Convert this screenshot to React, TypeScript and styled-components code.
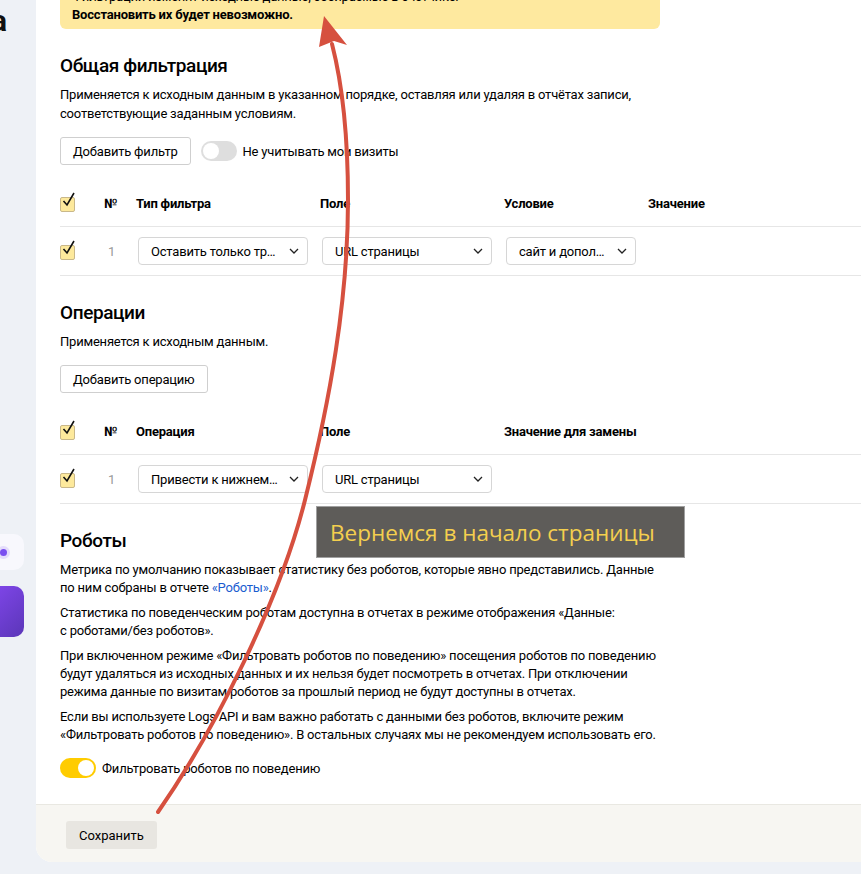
import React from "react";
import styled, { createGlobalStyle } from "styled-components";

const Global = createGlobalStyle`
  html, body { margin: 0; padding: 0; }
  body {
    background: #eef1f6;
    font-family: Roboto, "Liberation Sans", Arial, sans-serif;
    letter-spacing: -0.2px;
    color: #000;
  }
`;

const Page = styled.div`
  position: relative;
  display: flex;
  width: 861px;
  height: 874px;
  overflow: hidden;
  background: #eef1f6;
`;

const Sidebar = styled.aside`
  width: 36px;
  flex: none;
  display: flex;
  flex-direction: column;
  overflow: hidden;
`;

const LogoTail = styled.div`
  font-size: 30px;
  font-weight: 700;
  line-height: 30px;
  margin: 6px 0 0 -9px;
  color: #111;
`;

const SidePill = styled.div`
  margin-top: 498px;
  width: 24px;
  height: 36px;
  background: #f8f8fd;
  border-radius: 0 10px 10px 0;
  display: flex;
  align-items: center;
`;

const SideDot = styled.span`
  width: 7px;
  height: 7px;
  border-radius: 50%;
  background: #7a4ff0;
  box-shadow: 0 0 0 3px #e4dcfb;
`;

const SideBlock = styled.div`
  margin-top: 16px;
  width: 24px;
  height: 51px;
  border-radius: 0 10px 10px 0;
  background: linear-gradient(135deg, #7d45e6, #5b36b8);
`;

const Main = styled.main`
  flex: 1;
  height: 862px;
  background: #fff;
  border-bottom-left-radius: 16px;
  display: flex;
  flex-direction: column;
  overflow: hidden;
`;

const Content = styled.div`
  flex: 1;
  padding-left: 24px;
`;

const Warning = styled.div`
  width: 600px;
  box-sizing: border-box;
  margin-top: -24px;
  padding: 12px 12px 5px;
  background: #fee99f;
  border-radius: 0 0 6px 6px;
  font-size: 13px;
  line-height: 18px;
`;

const Bold = styled.div`
  font-weight: 700;
`;

const Heading = styled.h2`
  margin: 25px 0 0;
  font-size: 19px;
  font-weight: 500;
  line-height: 24px;
  letter-spacing: -0.4px;
`;

const Desc = styled.p`
  margin: 7px 0 0;
  font-size: 13px;
  line-height: 19px;
  max-width: 600px;
`;

const Para = styled.p`
  margin: 8px 0 0;
  font-size: 13px;
  line-height: 18px;
  max-width: 604px;
  & + & {
    margin-top: 7px;
  }
`;

const Link = styled.a`
  color: #1a5ccf;
  text-decoration: none;
`;

const ActionRow = styled.div<{ $top?: number }>`
  display: flex;
  align-items: center;
  gap: 10px;
  margin-top: ${(p) => p.$top ?? 14}px;
`;

const Button = styled.button`
  height: 28px;
  padding: 0 12px;
  background: #fff;
  border: 1px solid #cfcfcf;
  border-radius: 3px;
  font-family: inherit;
  font-size: 13px;
  letter-spacing: -0.2px;
  color: #000;
`;

const Toggle = styled.span<{ $on?: boolean }>`
  position: relative;
  width: 36px;
  height: 20px;
  border-radius: 10px;
  background: ${(p) => (p.$on ? "#ffcc00" : "#dedede")};
  flex: none;
  &::after {
    content: "";
    position: absolute;
    top: 2px;
    left: ${(p) => (p.$on ? "18px" : "2px")};
    width: 16px;
    height: 16px;
    border-radius: 50%;
    background: #fff;
  }
`;

const ToggleLabel = styled.label`
  display: flex;
  align-items: center;
  gap: 6px;
  font-size: 13px;
`;

const Table = styled.div`
  margin-top: 16px;
`;

const Row = styled.div<{ $head?: boolean }>`
  display: grid;
  grid-template-columns: 44px 32px 184px 184px 144px 1fr;
  align-items: center;
  height: ${(p) => (p.$head ? 45 : 48)}px;
  border-bottom: 1px solid #e6e6e6;
  font-size: 13px;
  font-weight: ${(p) => (p.$head ? 700 : 400)};
`;

const Num = styled.span`
  color: #999;
  padding-left: 4px;
`;

const Box = styled.span`
  position: relative;
  display: block;
  width: 13px;
  height: 13px;
  margin-top: 2px;
  background: #fde99c;
  border: 1px solid #c9b88a;
  border-radius: 2px;
  svg {
    position: absolute;
    left: 1px;
    top: -6px;
  }
`;

const Select = styled.div<{ $w: number }>`
  display: flex;
  align-items: center;
  justify-content: space-between;
  width: ${(p) => p.$w}px;
  height: 28px;
  box-sizing: border-box;
  margin-left: 2px;
  padding: 0 8px 0 12px;
  border: 1px solid #d6d6d6;
  border-radius: 4px;
  font-size: 13px;
  white-space: nowrap;
`;

const Footer = styled.footer`
  height: 58px;
  flex: none;
  box-sizing: border-box;
  padding: 16px 0 0 30px;
  background: #f7f6f2;
  border-top: 1px solid #e9e8e2;
`;

const SaveButton = styled.button`
  height: 28px;
  padding: 0 13px;
  border: none;
  border-radius: 3px;
  background: #e8e6e1;
  font-family: inherit;
  font-size: 13px;
  color: #000;
`;

const Caption = styled.div`
  position: absolute;
  left: 316px;
  top: 506px;
  width: 369px;
  height: 52px;
  box-sizing: border-box;
  padding-left: 13px;
  display: flex;
  align-items: center;
  background: #5e5c59;
  border: 1px solid #a0a0a0;
  color: #f4cf4e;
  font-family: "Open Sans", sans-serif;
  font-size: 22.5px;
  letter-spacing: 0;
`;

const ArrowLayer = styled.svg`
  position: absolute;
  left: 0;
  top: 0;
  pointer-events: none;
`;

const Check = () => (
  <Box>
    <svg width="14" height="16" viewBox="0 0 14 16">
      <path d="M1.5 9 L5 13 L12 1" fill="none" stroke="#111" strokeWidth="1.6" />
    </svg>
  </Box>
);

const Chevron = () => (
  <svg width="10" height="6" viewBox="0 0 10 6">
    <path d="M1 1 L5 5 L9 1" fill="none" stroke="#222" strokeWidth="1.3" />
  </svg>
);

const Sel = ({ w, children }: { w: number; children: React.ReactNode }) => (
  <Select $w={w}>
    <span>{children}</span>
    <Chevron />
  </Select>
);

export default function App() {
  return (
    <Page>
      <Global />
      <Sidebar>
        <LogoTail>а</LogoTail>
        <SidePill>
          <SideDot />
        </SidePill>
        <SideBlock />
      </Sidebar>
      <Main>
        <Content>
          <Warning>
            <div>Фильтрации изменят исходные данные, собираемые в счётчике.</div>
            <Bold>Восстановить их будет невозможно.</Bold>
          </Warning>

          <Heading>Общая фильтрация</Heading>
          <Desc>
            Применяется к исходным данным в указанном порядке, оставляя или удаляя в отчётах записи,
            соответствующие заданным условиям.
          </Desc>
          <ActionRow>
            <Button>Добавить фильтр</Button>
            <ToggleLabel>
              <Toggle />
              Не учитывать мои визиты
            </ToggleLabel>
          </ActionRow>
          <Table>
            <Row $head>
              <Check />
              <span>№</span>
              <span>Тип фильтра</span>
              <span>Поле</span>
              <span>Условие</span>
              <span>Значение</span>
            </Row>
            <Row>
              <Check />
              <Num>1</Num>
              <Sel w={170}>Оставить только тр…</Sel>
              <Sel w={170}>URL страницы</Sel>
              <Sel w={130}>сайт и допол…</Sel>
              <span />
            </Row>
          </Table>

          <Heading>Операции</Heading>
          <Desc>Применяется к исходным данным.</Desc>
          <ActionRow>
            <Button>Добавить операцию</Button>
          </ActionRow>
          <Table>
            <Row $head>
              <Check />
              <span>№</span>
              <span>Операция</span>
              <span>Поле</span>
              <span style={{ gridColumn: "5 / 7" }}>Значение для замены</span>
            </Row>
            <Row>
              <Check />
              <Num>1</Num>
              <Sel w={170}>Привести к нижнем…</Sel>
              <Sel w={170}>URL страницы</Sel>
              <span />
              <span />
            </Row>
          </Table>

          <Heading>Роботы</Heading>
          <Para>
            Метрика по умолчанию показывает статистику без роботов, которые явно представились. Данные
            по ним собраны в отчете <Link>«Роботы»</Link>.
          </Para>
          <Para>
            Статистика по поведенческим роботам доступна в отчетах в режиме отображения «Данные:
            с{"\u00A0"}роботами/без роботов».
          </Para>
          <Para>
            При включенном режиме «Фильтровать роботов по поведению» посещения роботов по поведению
            будут удаляться из исходных данных и их нельзя будет посмотреть в отчетах. При отключении
            режима данные по визитам роботов за прошлый период не будут доступны в отчетах.
          </Para>
          <Para>
            Если вы используете Logs API и вам важно работать с данными без роботов, включите режим
            «Фильтровать роботов по поведению». В остальных случаях мы не рекомендуем использовать его.
          </Para>
          <ActionRow $top={14}>
            <ToggleLabel>
              <Toggle $on />
              Фильтровать роботов по поведению
            </ToggleLabel>
          </ActionRow>
        </Content>
        <Footer>
          <SaveButton>Сохранить</SaveButton>
        </Footer>
      </Main>

      <Caption>Вернемся в начало страницы</Caption>
      <ArrowLayer width="861" height="874" viewBox="0 0 861 874">
        <path
          d="M158,812 C215,730 280,600 305,500 C330,400 348,300 348,200 C348,120 340,75 332,44"
          fill="none"
          stroke="#d6503f"
          strokeWidth="4"
          strokeLinecap="round"
        />
        <path d="M324,16 L347,45 L334,41 L319,47 Z" fill="#d6503f" />
      </ArrowLayer>
    </Page>
  );
}
